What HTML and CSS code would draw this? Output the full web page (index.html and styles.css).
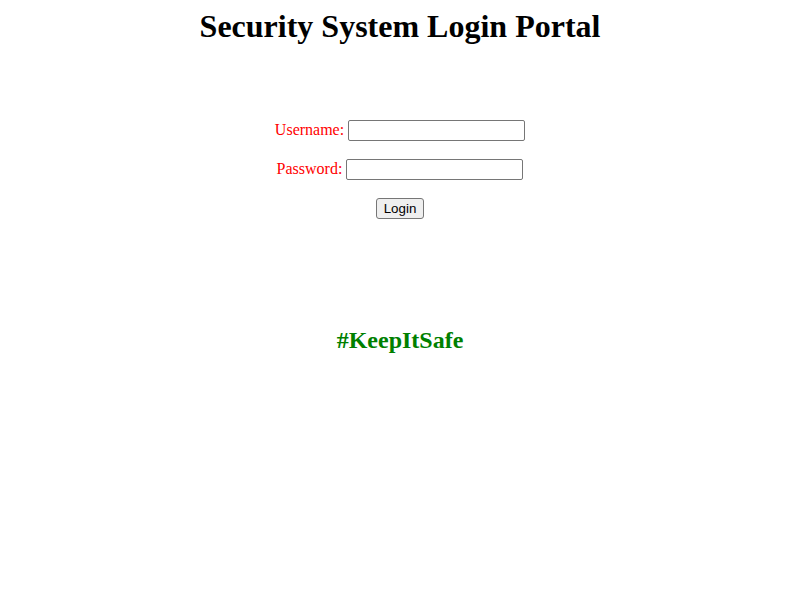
FILE: index.html
```html
<!DOCTYPE html>
<html>
<head>
<meta charset="utf-8">
<title>Security System Login Portal</title>
<link rel="stylesheet" href="styles.css">
</head>
<body>
<h1 class="title">Security System Login Portal</h1>
<form class="login">
  <div class="row"><label class="lbl" for="u">Username:</label> <input class="field" id="u" type="text"></div>
  <div class="row"><label class="lbl" for="p">Password:</label> <input class="field" id="p" type="password"></div>
  <div class="row"><button class="btn" type="button">Login</button></div>
</form>
<h2 class="tag">#KeepItSafe</h2>
</body>
</html>
```
FILE: styles.css
```css
body {
  margin: 0;
  font-family: "Liberation Serif", "Times New Roman", serif;
  font-size: 16px;
  color: #000;
  background: #fff;
}
.title {
  margin: 8px 0 0;
  font-size: 32px;
  font-weight: bold;
  text-align: center;
}
.login {
  margin-top: 75px;
  display: flex;
  flex-direction: column;
  gap: 17px;
}
.row {
  text-align: center;
  height: 22px;
}
.lbl {
  color: #ff0000;
}
.field {
  font-family: "Liberation Sans", Arial, sans-serif;
  font-size: 13.33px;
  width: 177px;
  height: 21px;
  box-sizing: border-box;
  border: 1px solid #767676;
  border-radius: 2px;
  padding: 1px 2px;
  vertical-align: baseline;
}
.btn {
  font-family: "Liberation Sans", Arial, sans-serif;
  font-size: 13.33px;
  padding: 1px 6px;
  height: 21px;
  width: 48px;
  border: 1px solid #767676;
  border-radius: 3px;
  background: #efefef;
  color: #000;
}
.tag {
  margin: 107px 0 0;
  font-size: 24px;
  font-weight: bold;
  color: #008000;
  text-align: center;
}
```
